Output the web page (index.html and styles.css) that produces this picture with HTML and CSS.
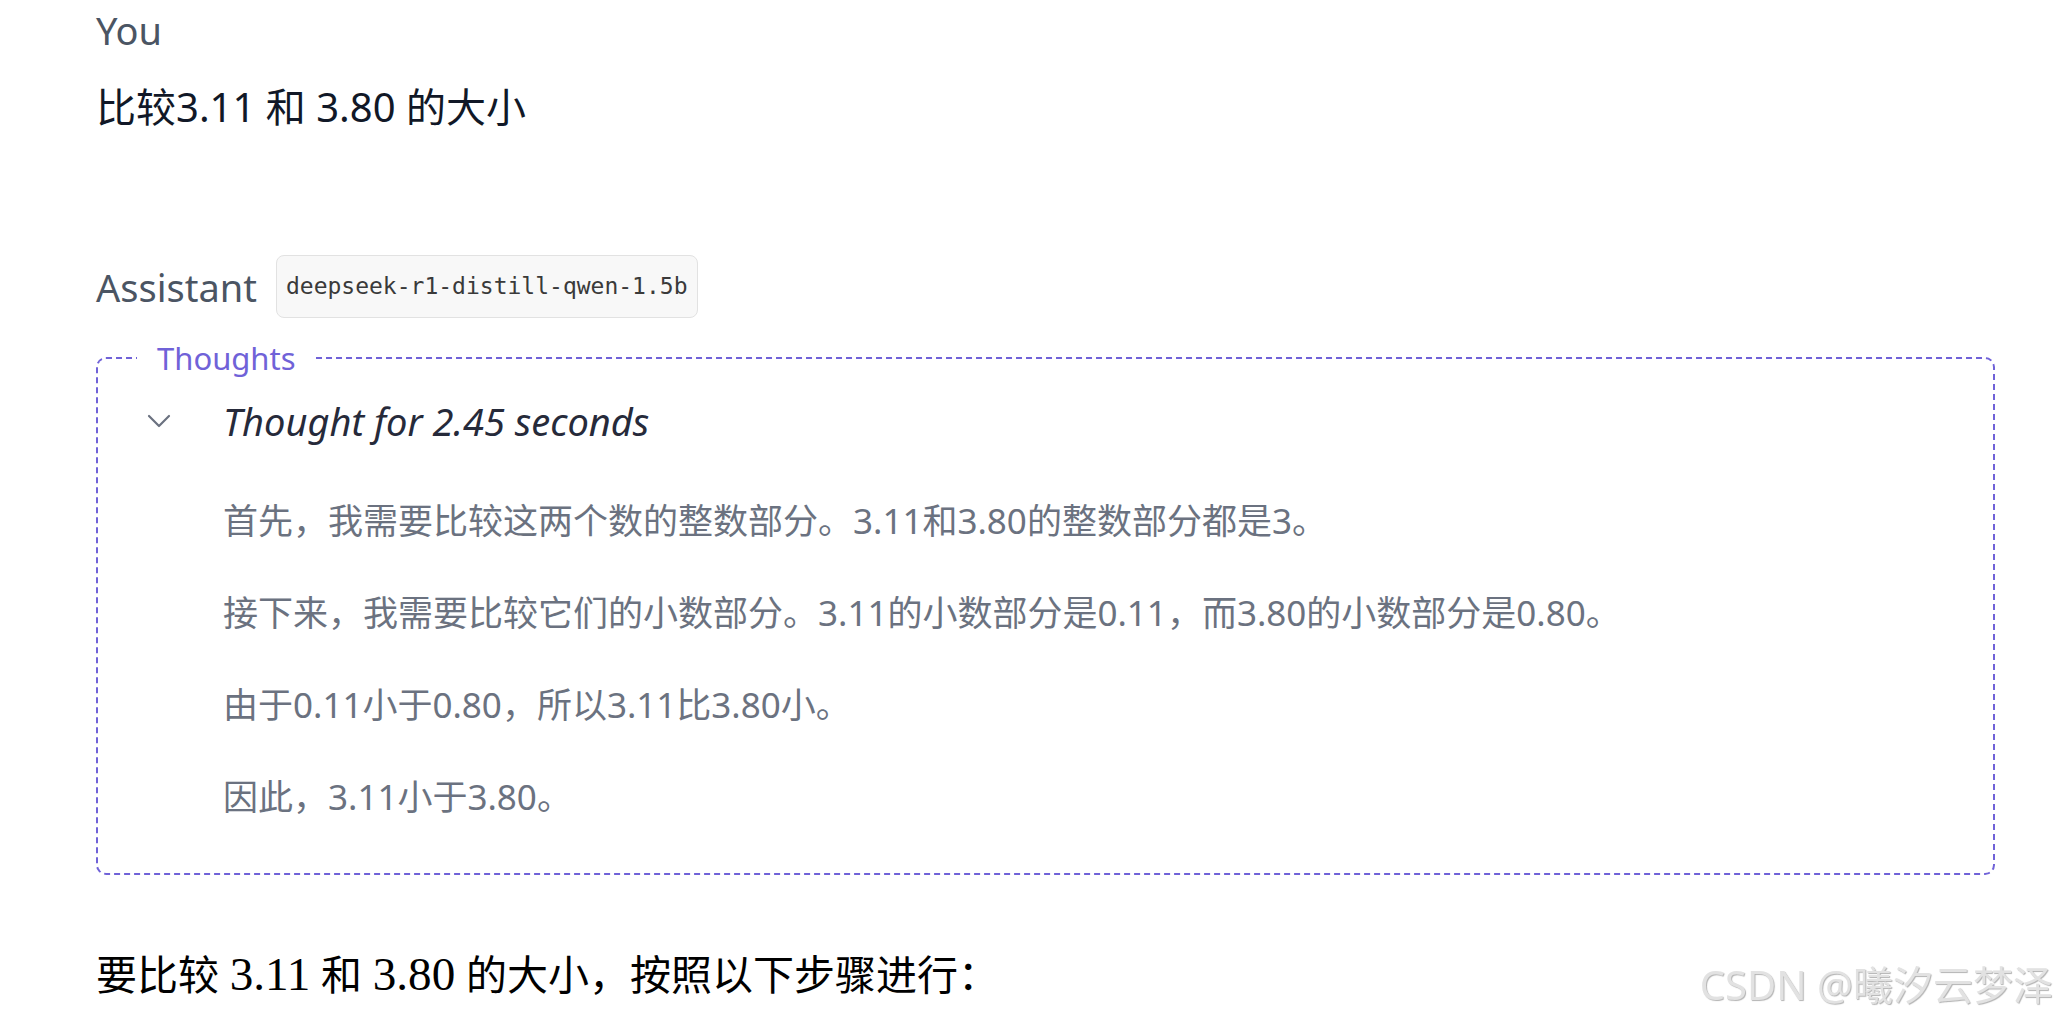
FILE: index.html
```html
<!DOCTYPE html>
<html lang="zh-CN">
<head>
  <meta charset="UTF-8">
  <title>Chat</title>
  <link rel="stylesheet" href="styles.css">
</head>
<body>
  <main class="chat">
    <section class="msg">
      <div class="role">You</div>
      <div class="user-text">比较3.11 和 3.80 的大小</div>
    </section>

    <section class="msg assistant">
      <div class="role-row">
        <span class="role">Assistant</span>
        <span class="model-tag">deepseek-r1-distill-qwen-1.5b</span>
      </div>

      <fieldset class="thoughts">
        <legend>Thoughts</legend>
        <div class="thought-head">
          <svg class="chevron" width="24" height="14" viewBox="0 0 24 14">
            <polyline points="2,2 12,12 22,2" fill="none" stroke="#6b7280" stroke-width="2.2" stroke-linecap="round" stroke-linejoin="round"/>
          </svg>
          <span>Thought for 2.45 seconds</span>
        </div>
        <div class="thought-body">
          <p>首先，我需要比较这两个数的整数部分。3.11和3.80的整数部分都是3。</p>
          <p>接下来，我需要比较它们的小数部分。3.11的小数部分是0.11，而3.80的小数部分是0.80。</p>
          <p>由于0.11小于0.80，所以3.11比3.80小。</p>
          <p>因此，3.11小于3.80。</p>
        </div>
      </fieldset>

      <p class="answer">要比较 <span class="math">3.11</span> 和 <span class="math">3.80</span> 的大小，按照以下步骤进行：</p>
    </section>
  </main>

  <div class="watermark">CSDN @曦汐云梦泽</div>
</body>
</html>
```

FILE: styles.css
```css
body {
  margin: 0;
  background: #fff;
  font-family: "Noto Sans", "Noto Sans CJK SC", sans-serif;
  color: #111827;
}
.chat { padding: 6px 64px 0 96px; }

.role { font-size: 38px; line-height: 48px; color: #4b5563; }
.user-text { margin-top: 25px; font-size: 40px; line-height: 56px; color: #111827; }

.assistant { margin-top: 120px; }
.role-row { display: flex; align-items: center; gap: 19px; }
.model-tag {
  font-family: "DejaVu Sans Mono", monospace;
  font-size: 23px;
  line-height: 61px;
  padding: 0 9px;
  color: #3a3a3a;
  background: #f8f8f8;
  border: 1px solid #e2e2e2;
  border-radius: 8px;
}

.thoughts {
  margin: 20px 0 0;
  padding: 15px 0 48px;
  min-inline-size: auto;
  border: 2px dashed #7062d8;
  border-radius: 10px;
}
.thoughts legend {
  margin-left: 39px;
  padding: 0 20px;
  font-size: 31px;
  line-height: 40px;
  color: #7062d8;
}
.thought-head {
  display: flex;
  align-items: center;
  gap: 52px;
  padding-left: 49px;
  font-size: 38px;
  line-height: 56px;
  font-style: italic;
  color: #262a3a;
}
.chevron { display: block; }
.thought-body { padding-left: 125px; margin-top: 44px; }
.thought-body p {
  margin: 0 0 36px;
  font-size: 35px;
  line-height: 56px;
  color: #6b7280;
}
.thought-body p:last-child { margin-bottom: 0; }

.answer { margin: 71px 0 0; font-size: 41px; line-height: 56px; color: #000; }
.math { font-family: "Liberation Serif", serif; font-size: 1.15em; line-height: 1; }

.watermark {
  position: fixed;
  right: 6px;
  bottom: 15px;
  font-family: "Noto Sans", "Noto Sans CJK SC", sans-serif;
  font-size: 40px;
  line-height: 40px;
  color: #e2e2e2;
  text-shadow: 1px 1px 1px rgba(0, 0, 0, 0.3);
}
```
